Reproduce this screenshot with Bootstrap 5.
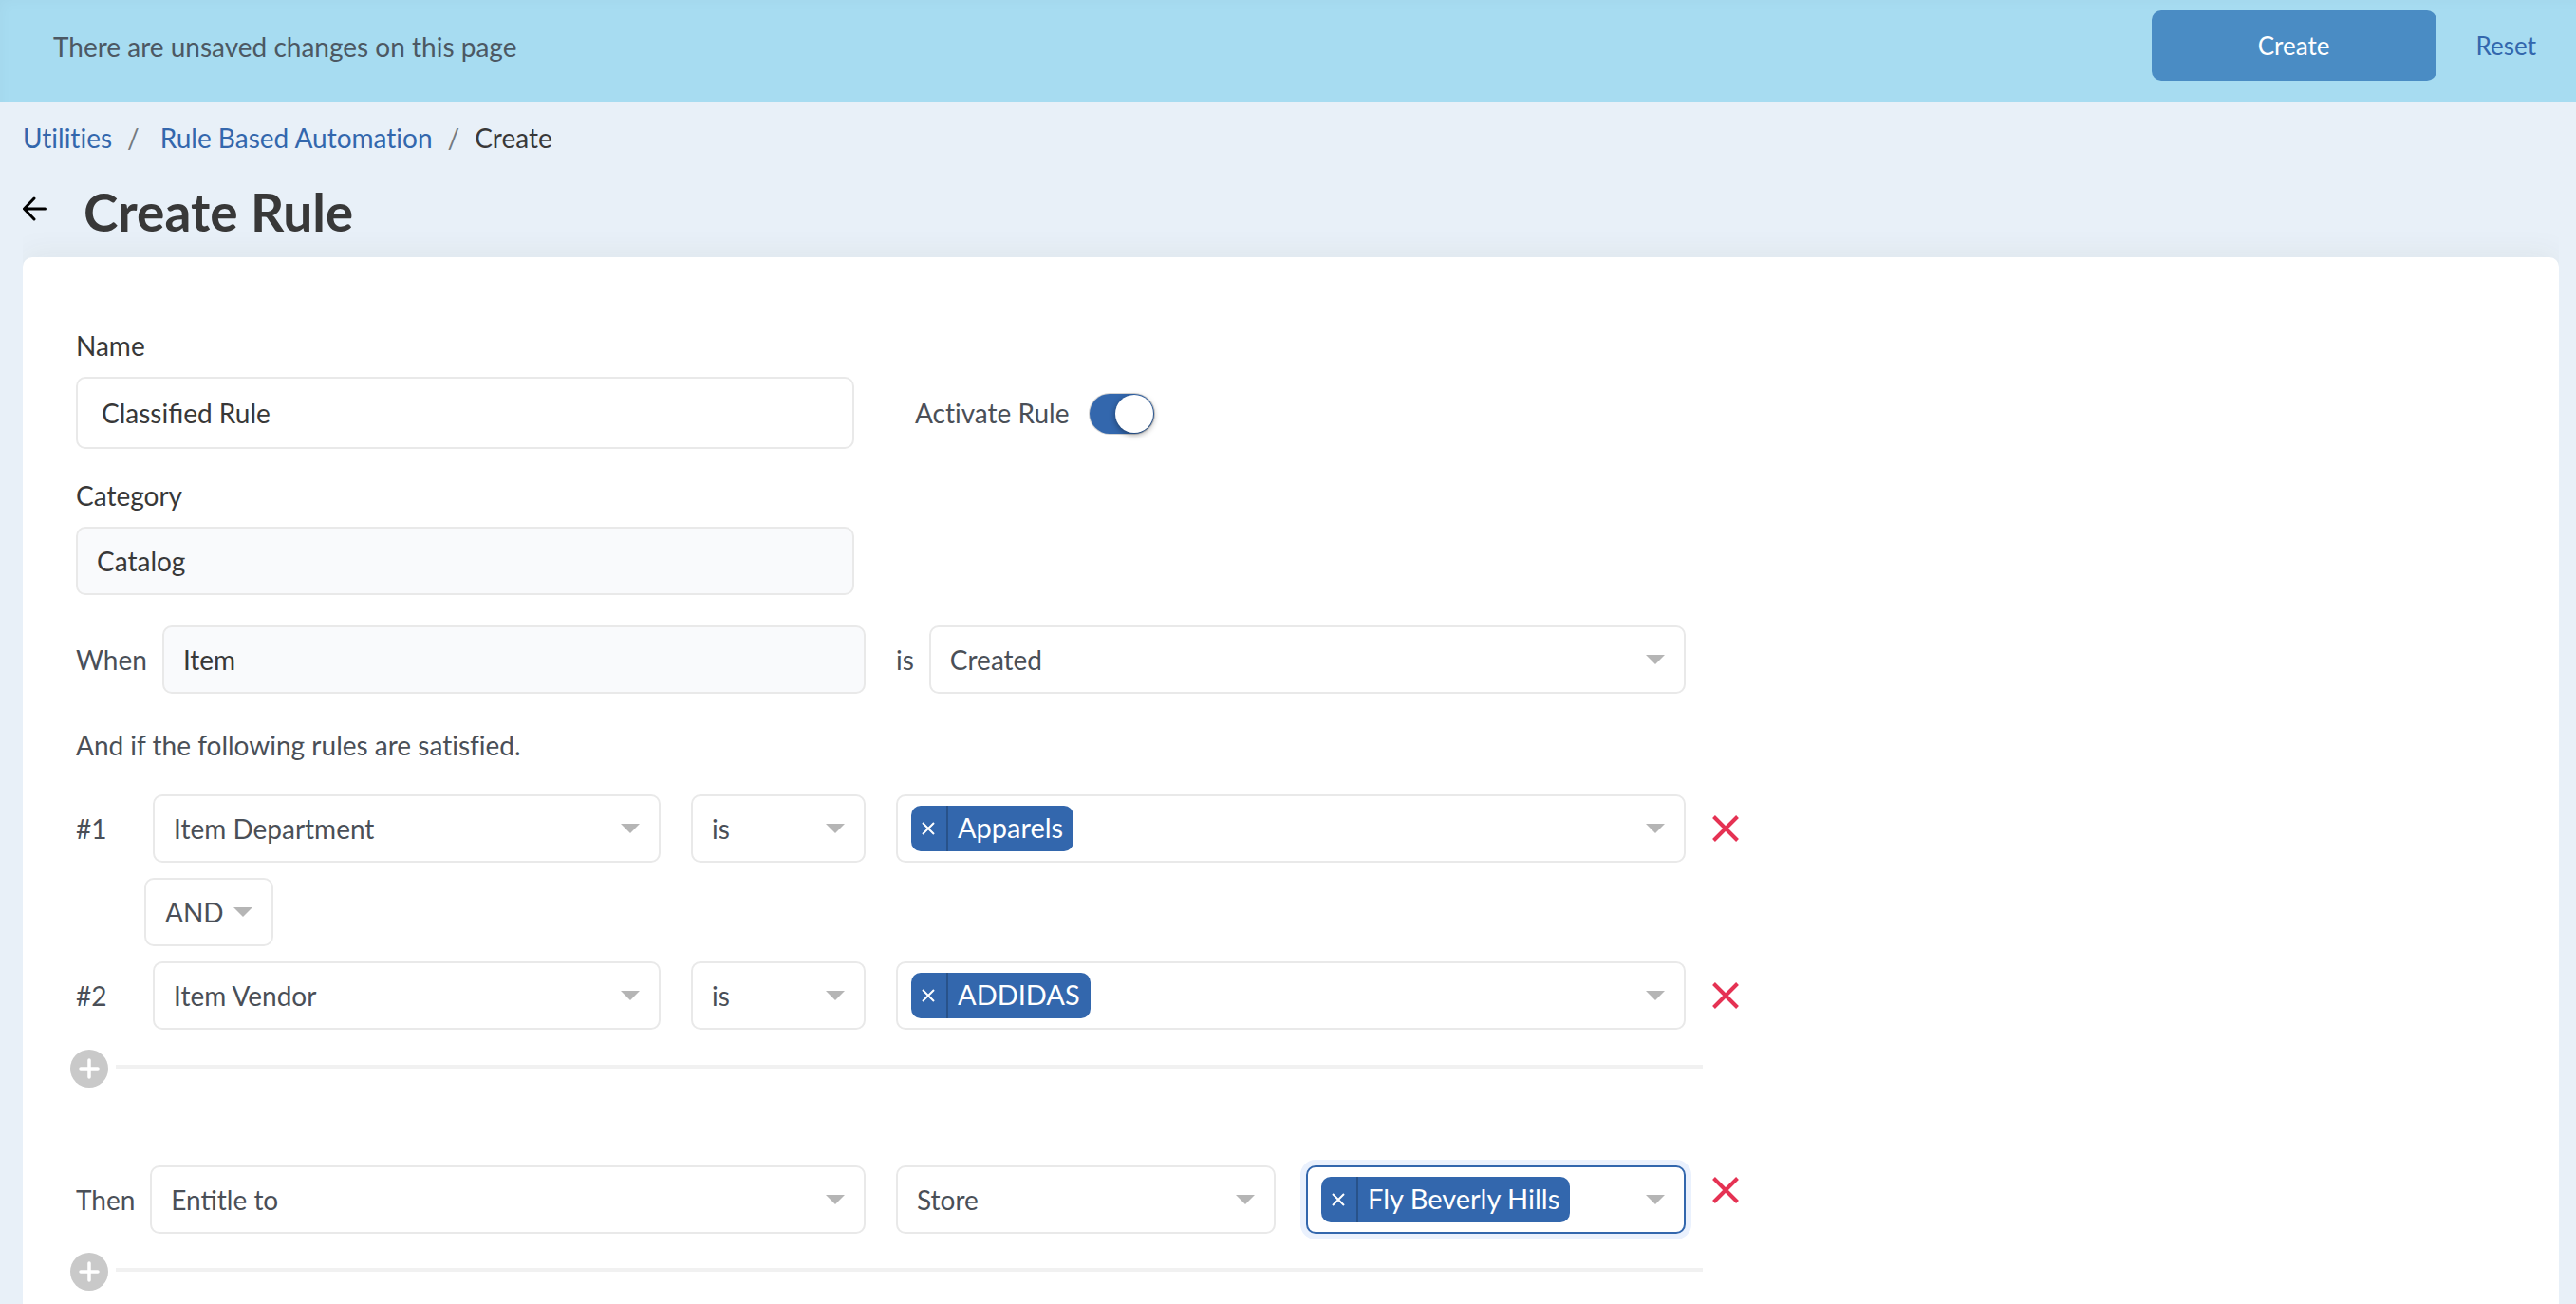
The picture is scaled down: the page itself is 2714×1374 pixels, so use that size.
<!DOCTYPE html>
<html lang="en">
<head>
<meta charset="utf-8">
<meta name="viewport" content="width=device-width, initial-scale=1">
<title>Create Rule</title>
<link href="https://cdn.jsdelivr.net/npm/bootstrap@5.3.0/dist/css/bootstrap.min.css" rel="stylesheet">
<style>
  :root {
    --brand: #3367ad;
    --ink: #383838;
    --ink-soft: #4a4f57;
    --line: #e9e9e9;
  }
  body {
    font-family: Lato, "Liberation Sans", sans-serif;
    font-variant-ligatures: none;
    font-size: 28px;
    line-height: 40px;
    color: var(--ink-soft);
    background: #e8f0f8;
    overflow-x: hidden;
  }
  a { color: var(--brand); text-decoration: none; }
  .row { --bs-gutter-x: 32px; }

  /* unsaved changes bar */
  .save-bar {
    height: 108px;
    padding: 11px 42px 0 56px;
    background: #a7dcf1;
    box-shadow: inset 8px 8px 16px -8px rgba(0, 0, 0, .03);
  }
  .save-bar p { line-height: 76px; color: #4c5863; }
  .btn-save {
    width: 300px;
    height: 74px;
    margin-right: 42px;
    font-size: 26px;
    color: #fff;
    background: #4a8cc4;
    border: 0;
    border-radius: 10px;
  }
  .btn-reset { padding: 0; font-size: 26px; line-height: 74px; color: var(--brand); border: 0; }

  /* page heading */
  .page-head { padding: 17px 24px 16px; }
  .breadcrumb { --bs-breadcrumb-item-padding-x: 16px; --bs-breadcrumb-divider-color: #747a80; --bs-breadcrumb-item-active-color: var(--ink); }
  .breadcrumb-item + .breadcrumb-item a { margin-left: 6px; }
  .title-line { margin-top: 26px; height: 64px; }
  .title-line h1 { font-size: 55px; line-height: 64px; font-weight: 700; color: var(--ink); }
  .back-link { width: 64px; }
  .back-link svg { display: block; margin-top: -6px; }

  /* form sheet */
  .sheet-clip { margin: 0 18px 0 24px; clip-path: inset(-40px 0 0 0); }
  .sheet {
    padding: 73px 56px 24px;
    background: #fff;
    border-radius: 10px 10px 0 0;
    box-shadow: 0 -4px 32px rgba(60, 60, 40, .06);
  }
  .col-name { padding-right: 28px; }
  .field-label { display: block; margin-bottom: 13px; color: var(--ink); }
  .form-control, .form-select, .tag-box {
    height: 72px;
    padding: 0 20px;
    font-size: 28px;
    line-height: 40px;
    color: var(--ink-soft);
    border: 2px solid var(--line);
    border-radius: 10px;
  }
  .form-select, .tag-box {
    background: #fff url("data:image/svg+xml,%3Csvg xmlns='http://www.w3.org/2000/svg' width='20' height='10'%3E%3Cpath d='M0 0h20L10 10z' fill='%23b5b5b5'/%3E%3C/svg%3E") no-repeat right 20px center / 20px 10px;
  }
  .form-control { color: var(--ink); }
  .form-control.input-name { height: 76px; padding: 0 25px; }
  .form-control[readonly] { background: #f9fafc; }
  .min-0 { min-width: 0; flex: 1 1 0; }

  .switch-line { height: 76px; padding-left: 20px; }
  .form-check-input.toggle {
    width: 68px;
    height: 42px;
    margin: 2px 0 0 22px;
    border: 0;
    border-radius: 21px;
    background: var(--brand);
    box-shadow: 0 0 0 1px #d4d4d4;
    appearance: none;
    display: flex;
    justify-content: flex-end;
    align-items: center;
  }
  .toggle::after {
    content: "";
    width: 40px;
    height: 40px;
    margin-right: 1px;
    border-radius: 50%;
    background: #fff;
    box-shadow: 0 2px 6px rgba(0, 0, 0, .4);
  }

  .rule-no { width: 81px; }
  .joiner { width: 136px; margin-left: 72px; }
  .tag-box { display: flex; align-items: center; padding: 0 14px; }
  .tag-box.active { border-color: var(--brand); box-shadow: 0 0 0 6px #eaf1fd; }
  .tag {
    display: flex;
    height: 48px;
    margin-bottom: 1px;
    font-size: 29px;
    color: #fff;
    background: var(--brand);
    border-radius: 10px;
    overflow: hidden;
  }
  .tag button {
    width: 39px;
    padding: 0 0 0 11px;
    background: none;
    border: 0;
    border-right: 2px solid #28528a;
    display: flex;
    align-items: center;
  }
  .tag span { padding: 1px 11px 0 10px; line-height: 44px; }
  .btn-drop { display: block; padding: 0 0 0 12px; background: none; border: 0; }
  .btn-drop svg, .btn-plus svg { display: block; }
  .btn-plus { padding: 0; margin-left: -6px; background: none; border: 0; }
  .add-line { height: 40px; }
  .add-line hr { margin: 0 -18px 4px 8px; border: 0; height: 4px; background: #f1f1f1; opacity: 1; }
  .gap-12 { margin-top: 12px; }
  .gap-16 { margin-top: 16px; }
  .gap-20 { margin-top: 20px; }
  .gap-21 { margin-top: 21px; }
  .gap-29 { margin-top: 29px; }
  .gap-32 { margin-top: 32px; }
  .gap-34 { margin-top: 34px; }
  .gap-82 { margin-top: 82px; }
</style>
</head>
<body>

<header class="save-bar d-flex align-items-start">
  <p class="mb-0 me-auto">There are unsaved changes on this page</p>
  <button type="submit" form="rule-form" class="btn btn-save">Create</button>
  <button type="reset" form="rule-form" class="btn btn-reset">Reset</button>
</header>

<div class="page-head">
  <nav aria-label="breadcrumb">
    <ol class="breadcrumb mb-0">
      <li class="breadcrumb-item"><a href="#">Utilities</a></li>
      <li class="breadcrumb-item"><a href="#">Rule Based Automation</a></li>
      <li class="breadcrumb-item active" aria-current="page">Create</li>
    </ol>
  </nav>
  <div class="title-line d-flex align-items-center">
    <a href="#" class="back-link" aria-label="Back">
      <svg width="25" height="26" viewBox="0 0 25 26" fill="none" stroke="#000" stroke-width="3" stroke-linecap="round" stroke-linejoin="round"><path d="M23.500 13H2M12 2 1.500 13 12 24"/></svg>
    </a>
    <h1 class="mb-0">Create Rule</h1>
  </div>
</div>

<main class="sheet-clip">
  <form id="rule-form" class="sheet">

    <div class="row align-items-end">
      <div class="col-4 col-name">
        <label class="field-label" for="rule-name">Name</label>
        <input id="rule-name" type="text" class="form-control input-name" value="Classified Rule">
      </div>
      <div class="col-4">
        <div class="switch-line d-flex align-items-center">
          <label for="rule-active">Activate Rule</label>
          <input id="rule-active" type="checkbox" role="switch" class="form-check-input toggle" checked>
        </div>
      </div>
    </div>

    <div class="row gap-29">
      <div class="col-4 col-name">
        <label class="field-label" for="rule-category">Category</label>
        <input id="rule-category" type="text" class="form-control" value="Catalog" readonly>
      </div>
    </div>

    <div class="row gap-32">
      <div class="col-8">
        <div class="row">
          <div class="col-6 d-flex align-items-center gap-3">
            <label for="when-what">When</label>
            <input id="when-what" type="text" class="form-control min-0" value="Item" readonly>
          </div>
          <div class="col-6 d-flex align-items-center gap-3">
            <label for="when-event">is</label>
            <select id="when-event" class="form-select min-0"><option>Created</option></select>
          </div>
        </div>
      </div>
    </div>

    <p class="mb-0 gap-34">And if the following rules are satisfied.</p>

    <div class="row gap-32 align-items-center">
      <div class="col-8">
        <div class="row">
          <div class="col-6">
            <div class="row">
              <div class="col-9 d-flex align-items-center">
                <label class="rule-no" for="field-1">#1</label>
                <select id="field-1" class="form-select min-0"><option>Item Department</option></select>
              </div>
              <div class="col-3">
                <select class="form-select" aria-label="Rule 1 operator"><option>is</option></select>
              </div>
            </div>
          </div>
          <div class="col-6">
            <div class="tag-box">
              <div class="tag"><button type="button" aria-label="Remove Apparels"><svg width="14" height="14" viewBox="0 0 14 14" stroke="#fff" stroke-width="2"><path d="M1 1l12 12M13 1 1 13"/></svg></button><span>Apparels</span></div>
            </div>
          </div>
        </div>
      </div>
      <div class="col-auto p-0">
        <button type="button" class="btn-drop" aria-label="Delete rule 1"><svg width="28" height="28" viewBox="0 0 28 28" stroke="#e53253" stroke-width="4"><path d="M1.500 1.500l25 25M26.500 1.500l-25 25"/></svg></button>
      </div>
    </div>

    <div class="gap-16">
      <select class="form-select joiner" aria-label="Join rules with"><option>AND</option></select>
    </div>

    <div class="row gap-16 align-items-center">
      <div class="col-8">
        <div class="row">
          <div class="col-6">
            <div class="row">
              <div class="col-9 d-flex align-items-center">
                <label class="rule-no" for="field-2">#2</label>
                <select id="field-2" class="form-select min-0"><option>Item Vendor</option></select>
              </div>
              <div class="col-3">
                <select class="form-select" aria-label="Rule 2 operator"><option>is</option></select>
              </div>
            </div>
          </div>
          <div class="col-6">
            <div class="tag-box">
              <div class="tag"><button type="button" aria-label="Remove ADDIDAS"><svg width="14" height="14" viewBox="0 0 14 14" stroke="#fff" stroke-width="2"><path d="M1 1l12 12M13 1 1 13"/></svg></button><span>ADDIDAS</span></div>
            </div>
          </div>
        </div>
      </div>
      <div class="col-auto p-0">
        <button type="button" class="btn-drop" aria-label="Delete rule 2"><svg width="28" height="28" viewBox="0 0 28 28" stroke="#e53253" stroke-width="4"><path d="M1.500 1.500l25 25M26.500 1.500l-25 25"/></svg></button>
      </div>
    </div>

    <div class="row gap-21">
      <div class="col-8">
        <div class="add-line d-flex align-items-center">
          <button type="button" class="btn-plus" aria-label="Add rule"><svg width="40" height="40" viewBox="0 0 40 40"><circle cx="20" cy="20" r="20" fill="#c9c9c9"/><path d="M20 11v18M11 20h18" stroke="#fff" stroke-width="3.500" stroke-linecap="round"/></svg></button>
          <hr class="flex-grow-1">
        </div>
      </div>
    </div>

    <div class="row gap-82 align-items-start">
      <div class="col-8">
        <div class="row">
          <div class="col-6 d-flex align-items-center gap-3">
            <label for="then-action">Then</label>
            <select id="then-action" class="form-select min-0"><option>Entitle to</option></select>
          </div>
          <div class="col-3">
            <select class="form-select" aria-label="Target type"><option>Store</option></select>
          </div>
          <div class="col-3">
            <div class="tag-box active">
              <div class="tag"><button type="button" aria-label="Remove Fly Beverly Hills"><svg width="14" height="14" viewBox="0 0 14 14" stroke="#fff" stroke-width="2"><path d="M1 1l12 12M13 1 1 13"/></svg></button><span>Fly Beverly Hills</span></div>
            </div>
          </div>
        </div>
      </div>
      <div class="col-auto p-0">
        <button type="button" class="btn-drop gap-12" aria-label="Delete action"><svg width="28" height="28" viewBox="0 0 28 28" stroke="#e53253" stroke-width="4"><path d="M1.500 1.500l25 25M26.500 1.500l-25 25"/></svg></button>
      </div>
    </div>

    <div class="row gap-20">
      <div class="col-8">
        <div class="add-line d-flex align-items-center">
          <button type="button" class="btn-plus" aria-label="Add action"><svg width="40" height="40" viewBox="0 0 40 40"><circle cx="20" cy="20" r="20" fill="#c9c9c9"/><path d="M20 11v18M11 20h18" stroke="#fff" stroke-width="3.500" stroke-linecap="round"/></svg></button>
          <hr class="flex-grow-1">
        </div>
      </div>
    </div>

  </form>
</main>

<script src="https://cdn.jsdelivr.net/npm/bootstrap@5.3.0/dist/js/bootstrap.bundle.min.js"></script>
</body>
</html>
